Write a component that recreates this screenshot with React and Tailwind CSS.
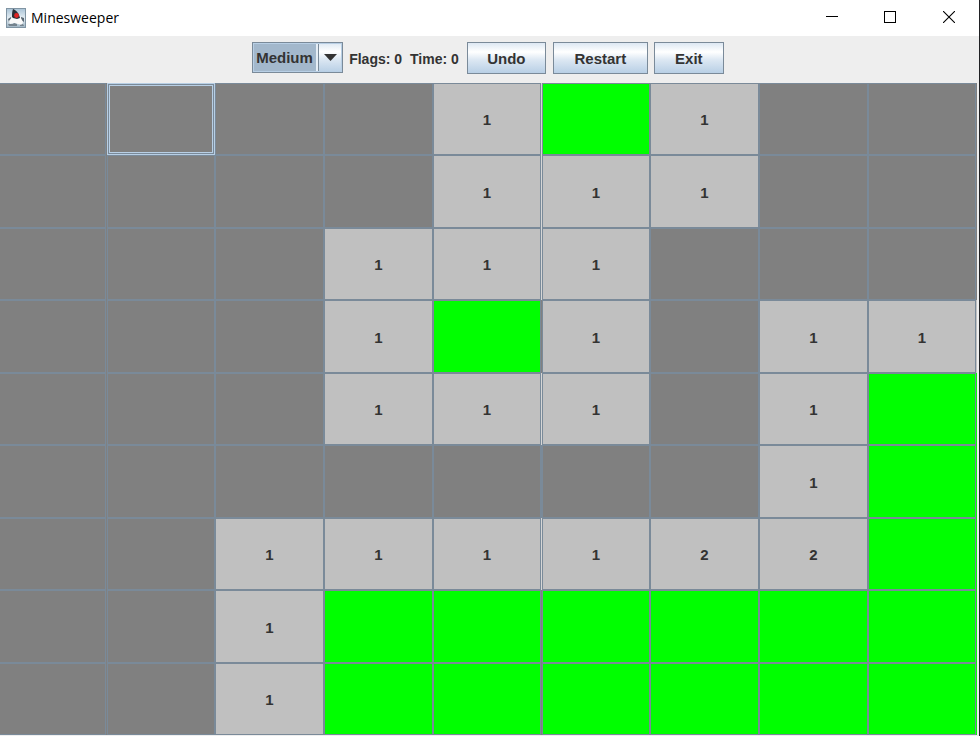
const ROWS = [
  "....1F1..",
  "....111..",
  "...111...",
  "...1F1.11",
  "...111.1F",
  ".......1F",
  "..111122F",
  "..1FFFFFF",
  "..1FFFFFF",
];

const FILL = { ".": "bg-[#808080]", F: "bg-[#00ff00]" };
const CENTER_GAP = { ".": "bg-[#7a8a99]", F: "bg-[#808080]" };
const BUTTON =
  "h-8 border border-[#7a8a99] bg-[linear-gradient(#dde8f3,#ffffff_30%,#dde8f3_55%,#b8cfe5)] pt-0.5 text-center";

function Cell({ value, row, col }) {
  const fill = FILL[value] || "bg-[#c0c0c0]";
  const spaced = col === 0 || col === 4 || col === 8;
  const gap = (col === 4 && CENTER_GAP[value]) || (col === 4 ? "bg-[#d6d6d6]" : fill);
  const focused = row === 0 && col === 1;
  const number = value === "." || value === "F" ? "" : value;
  return (
    <div className={`flex min-h-0 min-w-0 ${gap} ${spaced ? "pr-px" : ""}`}>
      <button
        type="button"
        aria-label={`Row ${row + 1}, column ${col + 1}`}
        className={`flex flex-1 items-center justify-center border ${fill} ${
          focused ? "border-[#b8cfe5] p-px outline-none" : "border-[#7a8a99] pt-0.5"
        } ${col === 0 ? "border-l-0" : ""}`}
      >
        {focused ? (
          <span className="h-full w-full border border-[#b8cfe5] ring-1 ring-[#7a8a99]" />
        ) : (
          number
        )}
      </button>
    </div>
  );
}

function DukeIcon() {
  return (
    <svg width="20" height="20" viewBox="0 0 20 20" aria-hidden="true">
      <defs>
        <linearGradient id="duke" x1="0" y1="0" x2="0" y2="1">
          <stop offset="0" stopColor="#a9c3d6" />
          <stop offset="0.5" stopColor="#e4edf3" />
          <stop offset="1" stopColor="#9fb5c4" />
        </linearGradient>
      </defs>
      <rect x="0.5" y="0.5" width="19" height="19" fill="url(#duke)" stroke="#8094a3" />
      <path d="M2 11l3-2 1 3-3 2zM15 9l3 1v4l-3-2z" fill="#5a6873" />
      <path d="M6 9l-3 4 1 3 4-1 4 1 4 1 1-3-3-6z" fill="#fafafa" />
      <path d="M7 1c3 1 6 4 7 9l-3 1-4-1-1-1c0-3 0-5 1-8z" fill="#2b3138" />
      <circle cx="10.5" cy="7.5" r="2.4" fill="#e02424" />
      <path d="M2 16h5l1-1 3 1v2H3zM14 17l3-1 1 2h-4z" fill="#75838e" />
    </svg>
  );
}

export default function App() {
  return (
    <div className="flex h-screen flex-col border-r border-[#202124] bg-[#eeeeee] font-['Liberation_Sans',Arial,sans-serif] text-[15px] leading-5 font-bold text-[#333333]">
      <header className="flex h-9 shrink-0 items-center bg-white pl-1.5 text-black">
        <DukeIcon />
        <h1 className="ml-[5px] flex-1 font-['Open_Sans','Noto_Sans',sans-serif] text-sm font-normal">
          Minesweeper
        </h1>
        <div className="flex h-full">
          <button type="button" aria-label="Minimize" className="flex w-[58px] items-center justify-center">
            <svg width="12" height="12" shapeRendering="crispEdges">
              <path d="M0 4.500h12" stroke="#000" />
            </svg>
          </button>
          <button type="button" aria-label="Maximize" className="flex w-[58px] items-center justify-center pb-0.5">
            <svg width="12" height="12" shapeRendering="crispEdges">
              <rect x="0.5" y="0.5" width="11" height="11" fill="none" stroke="#000" />
            </svg>
          </button>
          <button type="button" aria-label="Close" className="flex w-[60px] items-center justify-center pb-0.5">
            <svg width="12" height="12">
              <path d="M0 0l12 12M12 0L0 12" stroke="#000" strokeWidth="1.1" />
            </svg>
          </button>
        </div>
      </header>

      <div className="flex h-[47px] shrink-0 items-start justify-center pt-1.5 pr-[3px]">
        <div className="relative mr-1.5 flex">
          <select
            aria-label="Difficulty"
            defaultValue="Medium"
            className="h-[31px] w-[91px] appearance-none border border-[#7a8a99] bg-[linear-gradient(90deg,#a3b8cc_63px,#e6eef6_63px,#e6eef6_65px,#7a8a99_65px,#7a8a99_66px,transparent_66px),linear-gradient(#dde8f3,#ffffff_30%,#dde8f3_55%,#b8cfe5)] pl-[3px] shadow-[inset_0_0_0_1px_#b8cfe5] outline-none"
          >
            <option>Easy</option>
            <option>Medium</option>
            <option>Hard</option>
          </select>
          <svg
            className="pointer-events-none absolute right-1.5 top-3"
            width="13"
            height="7"
            aria-hidden="true"
          >
            <path d="M0 0h13L6.500 7z" fill="#333333" />
          </svg>
        </div>
        <div className="mr-2 flex h-8 items-center gap-2 pt-0.5 text-sm">
          <span>Flags: 0</span>
          <span>Time: 0</span>
        </div>
        <button type="button" className={`${BUTTON} mr-[7px] w-[79px]`}>Undo</button>
        <button type="button" className={`${BUTTON} mr-1.5 w-[95px]`}>Restart</button>
        <button type="button" className={`${BUTTON} w-[70px]`}>Exit</button>
      </div>

      <main className="mb-px mr-0.5 grid min-h-0 flex-1 grid-cols-[107fr_108fr_109fr_109fr_109fr_108fr_109fr_109fr_109fr] grid-rows-[72fr_73fr_72fr_73fr_72fr_73fr_72fr_73fr_72fr]">
        {ROWS.flatMap((line, row) =>
          [...line].map((value, col) => (
            <Cell key={`${row}-${col}`} value={value} row={row} col={col} />
          ))
        )}
      </main>
    </div>
  );
}
